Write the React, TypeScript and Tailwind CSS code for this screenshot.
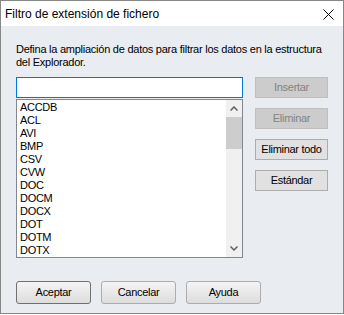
const extensions = ['ACCDB', 'ACL', 'AVI', 'BMP', 'CSV', 'CVW', 'DOC', 'DOCM', 'DOCX', 'DOT', 'DOTM', 'DOTX'];

const SideButton = ({ text, disabled }: { text: string; disabled?: boolean }) => (
  <button
    className={
      disabled
        ? 'h-[21px] w-[73px] border border-[#bfbfbf] bg-[#cccccc] text-[11px] tracking-[-0.3px] text-[#838383]'
        : 'h-[21px] w-[73px] border border-[#adadad] bg-[#e1e1e1] text-[11px] tracking-[-0.3px] text-black'
    }>
    {text}
  </button>
);

const FooterButton = ({ text, primary }: { text: string; primary?: boolean }) => (
  <button
    className={`h-[23px] w-[75px] rounded-[3px] border bg-gradient-to-b from-[#f4f4f4] to-[#dddddd] text-[11px] tracking-[-0.3px] text-black ${
      primary ? 'border-[#707070]' : 'border-[#acacac]'
    }`}>
    {text}
  </button>
);

export default function App() {
  return (
    <div
      className="flex h-[314px] w-[344px] flex-col border border-[#888888] bg-[#e9ecf0]"
      style={{ fontFamily: '"Liberation Sans", Arial, sans-serif' }}>
      <header className="flex h-[25px] shrink-0 items-center justify-between bg-white pl-[4px] pr-[9px]">
        <span className="text-[12px] text-black">Filtro de extensión de fichero</span>
        <svg width="11" height="11" viewBox="0 0 11 11" className="mt-[1px]">
          <path d="M0.5 0.5 L10.5 10.5 M10.5 0.5 L0.5 10.5" stroke="#000" strokeWidth="1" />
        </svg>
      </header>

      <div className="flex flex-1 flex-col px-[15px]">
        <p className="mt-[17px] text-[11px] leading-[13px] tracking-[-0.25px] text-black">
          Defina la ampliación de datos para filtrar los datos en la estructura del Explorador.
        </p>

        <div className="mt-[8px] flex gap-[12px]">
          <div className="flex w-[231px] flex-col">
            <input className="h-[21px] w-full border border-[#0078d7] bg-white outline-none" />
            <div className="mt-[1px] flex h-[159px] border border-[#828790] bg-white">
              <ul className="flex-1 pl-[3px] pt-[1px] text-[11px] leading-[13px] tracking-[-0.3px] text-black">
                {extensions.map((ext) => (
                  <li key={ext}>{ext}</li>
                ))}
              </ul>
              <div className="flex w-[16px] flex-col bg-[#f0f0f0]">
                <div className="flex h-[17px] items-center justify-center">
                  <svg width="8" height="5" viewBox="0 0 8 5">
                    <path d="M0.5 4.5 L4 1 L7.5 4.5" fill="none" stroke="#606060" strokeWidth="1.5" />
                  </svg>
                </div>
                <div className="h-[32px] bg-[#cdcdcd]" />
                <div className="flex-1" />
                <div className="flex h-[17px] items-center justify-center">
                  <svg width="8" height="5" viewBox="0 0 8 5">
                    <path d="M0.5 0.5 L4 4 L7.5 0.5" fill="none" stroke="#606060" strokeWidth="1.5" />
                  </svg>
                </div>
              </div>
            </div>
          </div>

          <div className="flex flex-col gap-[10px]">
            <SideButton text="Insertar" disabled />
            <SideButton text="Eliminar" disabled />
            <SideButton text="Eliminar todo" />
            <SideButton text="Estándar" />
          </div>
        </div>

        <footer className="mt-[23px] flex gap-[10px]">
          <FooterButton text="Aceptar" primary />
          <FooterButton text="Cancelar" />
          <FooterButton text="Ayuda" />
        </footer>
      </div>
    </div>
  );
}
